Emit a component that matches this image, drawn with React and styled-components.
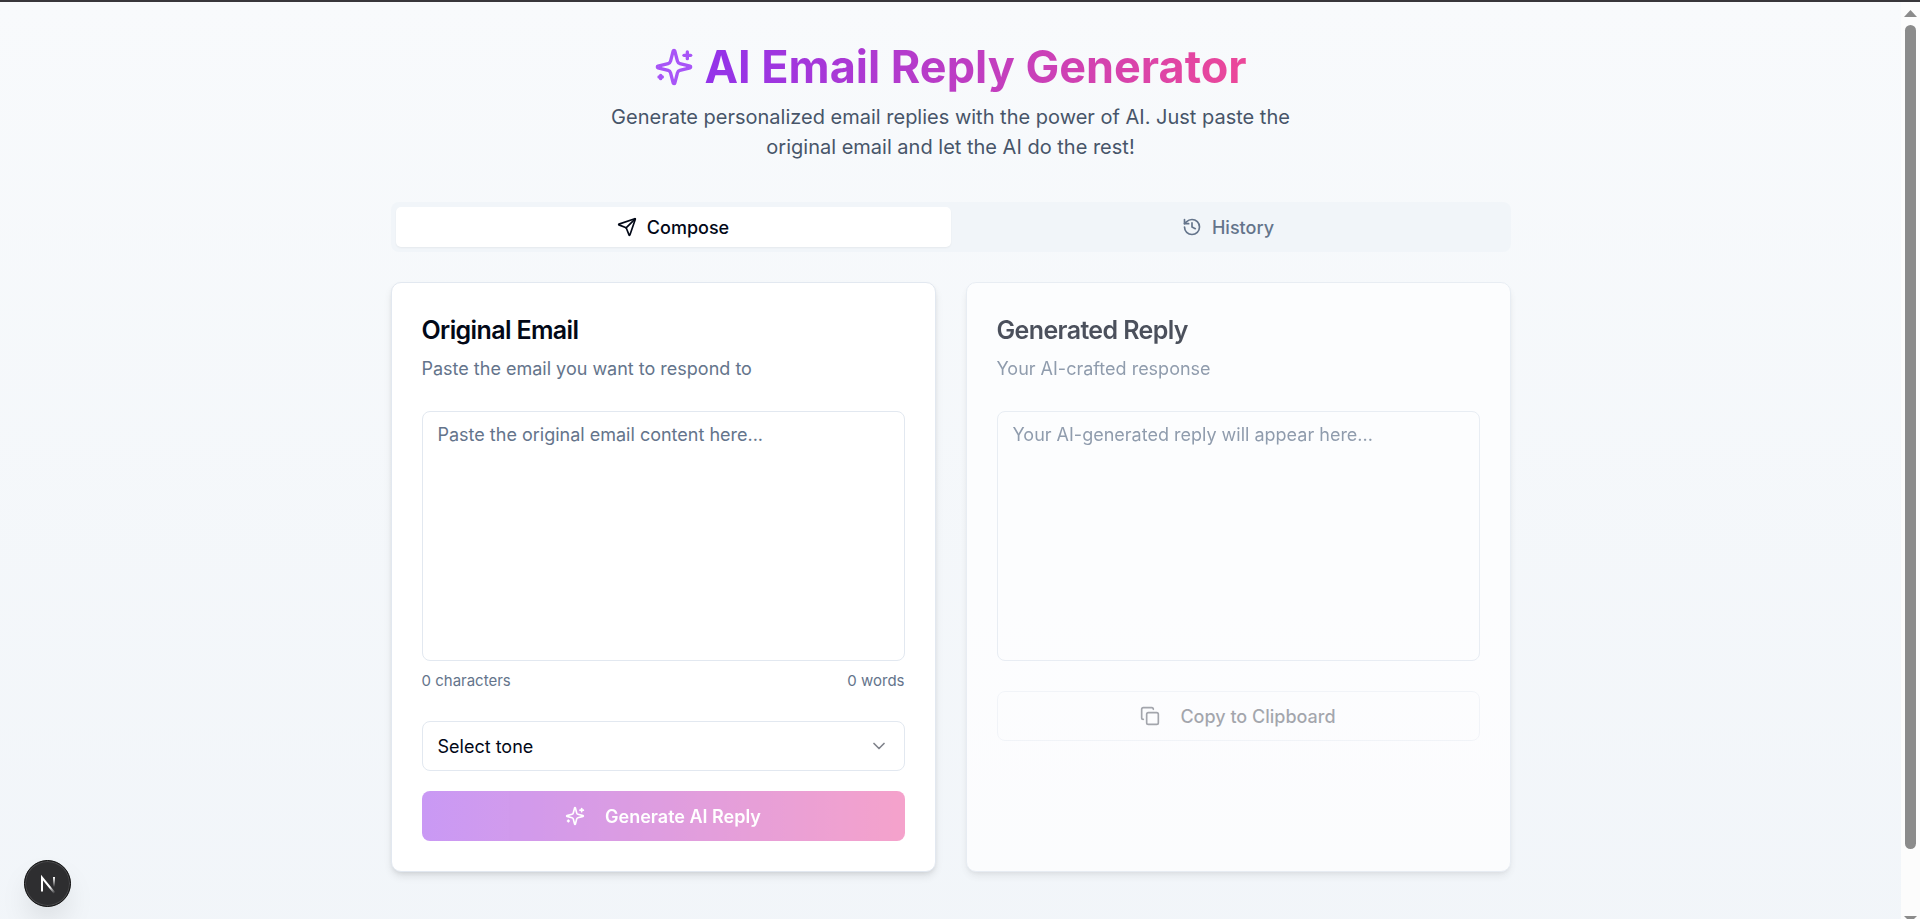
import React, { useState } from "react";
import styled, { createGlobalStyle, css } from "styled-components";
import { Send, History, Copy, ChevronDown } from "lucide-react";

const GlobalStyle = createGlobalStyle`
  *, *::before, *::after { box-sizing: border-box; }
  body {
    margin: 0;
    font-family: Inter, "Liberation Sans", sans-serif;
    font-size: 18px;
    line-height: 25px;
    color: #020817;
    background: #f1f5f9;
  }
  h1, h2, p { margin: 0; }
  button, textarea, select { font: inherit; color: inherit; }
`;

const Shell = styled.div`
  display: grid;
  grid-template-columns: minmax(0, 1fr) 19px;
  height: 100vh;
  border-top: 2px solid #38373b;
`;

const Viewport = styled.div`
  overflow-y: auto;
  scrollbar-width: none;
`;

const Page = styled.main`
  min-height: 108vh;
  padding: 40px 20px;
  background: linear-gradient(to bottom, #f8fafc, #f1f5f9);
`;

const Container = styled.div`
  max-width: 1120px;
  margin: 0 auto;
`;

const Header = styled.header`
  display: flex;
  flex-direction: column;
  align-items: center;
  gap: 10px;
  margin-bottom: 40px;
  text-align: center;
`;

const TitleRow = styled.div`
  display: flex;
  align-items: center;
  gap: 10px;
  color: #a855f7;
`;

const Title = styled.h1`
  font-size: 45px;
  line-height: 50px;
  font-weight: 700;
  color: transparent;
  background: linear-gradient(to right, #9333ea, #ec4899);
  background-clip: text;
  -webkit-background-clip: text;
`;

const Subtitle = styled.p`
  max-width: 720px;
  font-size: 20px;
  line-height: 30px;
  color: #475569;
`;

const TabList = styled.div`
  display: grid;
  grid-template-columns: 1fr 1fr;
  height: 50px;
  padding: 5px;
  margin-bottom: 30px;
  border-radius: 8px;
  background: #f1f5f9;
`;

const Tab = styled.button`
  display: flex;
  align-items: center;
  justify-content: center;
  gap: 10px;
  padding: 0;
  border: 0;
  border-radius: 5px;
  font-weight: 500;
  color: #64748b;
  background: transparent;
  ${(p) =>
    p.$active &&
    css`
      color: #020817;
      background: #ffffff;
      box-shadow: 0 1px 2px rgba(0, 0, 0, 0.05);
    `}
`;

const Cards = styled.div`
  display: grid;
  grid-template-columns: 1fr 1fr;
  gap: 30px;
`;

const Card = styled.section`
  padding: 30px;
  border: 1px solid #e2e8f0;
  border-radius: 10px;
  background: #ffffff;
  box-shadow: 0 5px 8px -1px rgba(0, 0, 0, 0.1), 0 2px 5px -2px rgba(0, 0, 0, 0.1);
  opacity: ${(p) => (p.$muted ? 0.7 : 1)};
`;

const CardHeader = styled.div`
  display: flex;
  flex-direction: column;
  gap: 8px;
  margin-bottom: 30px;
`;

const CardTitle = styled.h2`
  font-size: 25px;
  line-height: 35px;
  font-weight: 600;
  letter-spacing: -0.025em;
`;

const CardText = styled.p`
  color: #64748b;
`;

const TextBox = styled.textarea`
  display: block;
  width: 100%;
  height: 250px;
  padding: 10px 15px;
  border: 1px solid #e2e8f0;
  border-radius: 8px;
  background: #ffffff;
  resize: none;
  &::placeholder {
    color: #64748b;
    opacity: 1;
  }
`;

const Counters = styled.div`
  display: flex;
  justify-content: space-between;
  margin-top: 10px;
  font-size: 15px;
  line-height: 20px;
  color: #64748b;
`;

const SelectWrap = styled.div`
  position: relative;
  margin: 30px 0 20px;
  svg {
    position: absolute;
    top: 15px;
    right: 16px;
    opacity: 0.5;
    pointer-events: none;
  }
`;

const Select = styled.select`
  appearance: none;
  display: block;
  width: 100%;
  height: 50px;
  padding: 0 15px;
  border: 1px solid #e2e8f0;
  border-radius: 8px;
  background: #ffffff;
`;

const Button = styled.button`
  display: flex;
  align-items: center;
  justify-content: center;
  gap: 20px;
  width: 100%;
  height: 50px;
  border: 1px solid #e2e8f0;
  border-radius: 8px;
  font-weight: 500;
  background: #ffffff;
  &:disabled {
    opacity: 0.5;
  }
`;

const GenerateButton = styled(Button)`
  border: 0;
  font-weight: 600;
  color: #ffffff;
  background: linear-gradient(to right, #9333ea, #ec4899);
`;

const CopyButton = styled(Button)`
  margin-top: 30px;
`;

const ScrollTrack = styled.div`
  display: flex;
  flex-direction: column;
  align-items: center;
  padding-top: 8px;
  background: #fcfcfc;
`;

const ScrollThumb = styled.div`
  flex: 1;
  width: 11px;
  margin: 8px 0 67px;
  border-radius: 6px;
  background: #8b8b8b;
`;

const DevBadge = styled.button`
  position: fixed;
  left: 24px;
  bottom: 12px;
  width: 47px;
  height: 47px;
  padding: 0;
  border: 1px solid #0c0c0c;
  border-radius: 50%;
  display: grid;
  place-items: center;
  background: #2e2e30;
  box-shadow: inset 0 0 0 1px #4a4a4c, 0 16px 32px -8px rgba(0, 0, 0, 0.18);
`;

function SparklesIcon({ size }) {
  return (
    <svg
      width={size}
      height={size}
      viewBox="0 0 24 24"
      fill="none"
      stroke="currentColor"
      strokeWidth="2"
      strokeLinecap="round"
      strokeLinejoin="round"
      aria-hidden="true"
    >
      <path d="M9.937 15.5A2 2 0 0 0 8.5 14.063l-6.135-1.582a.5.5 0 0 1 0-.962L8.5 9.936A2 2 0 0 0 9.937 8.5l1.582-6.135a.5.5 0 0 1 .963 0L14.063 8.5A2 2 0 0 0 15.5 9.937l6.135 1.581a.5.5 0 0 1 0 .964L15.5 14.063a2 2 0 0 0-1.437 1.437l-1.582 6.135a.5.5 0 0 1-.963 0z" />
      <path d="M20 3v4" />
      <path d="M22 5h-4" />
      <path d="M4 17v2" />
      <path d="M5 18H3" />
    </svg>
  );
}

function NextLogo() {
  return (
    <svg width="20" height="20" viewBox="0 0 20 20" fill="none" aria-hidden="true">
      <defs>
        <linearGradient id="diag" x1="12" y1="13" x2="17" y2="19" gradientUnits="userSpaceOnUse">
          <stop stopColor="#fff" />
          <stop offset="1" stopColor="#fff" stopOpacity="0" />
        </linearGradient>
        <linearGradient id="stem" x1="16" y1="3" x2="16" y2="13" gradientUnits="userSpaceOnUse">
          <stop stopColor="#fff" />
          <stop offset="1" stopColor="#fff" stopOpacity="0" />
        </linearGradient>
      </defs>
      <path d="M4 17.5V3.5L16.5 19" stroke="url(#diag)" strokeWidth="2" />
      <path d="M16 3V14" stroke="url(#stem)" strokeWidth="2" />
    </svg>
  );
}

export default function App() {
  const [tab, setTab] = useState("compose");
  const [email, setEmail] = useState("");
  const words = email.trim() ? email.trim().split(/\s+/).length : 0;

  return (
    <>
      <GlobalStyle />
      <Shell>
        <Viewport>
          <Page>
            <Container>
              <Header>
                <TitleRow>
                  <SparklesIcon size={40} />
                  <Title>AI Email Reply Generator</Title>
                </TitleRow>
                <Subtitle>
                  Generate personalized email replies with the power of AI. Just paste the original
                  email and let the AI do the rest!
                </Subtitle>
              </Header>

              <TabList role="tablist">
                <Tab
                  role="tab"
                  aria-selected={tab === "compose"}
                  $active={tab === "compose"}
                  onClick={() => setTab("compose")}
                >
                  <Send size={20} />
                  Compose
                </Tab>
                <Tab
                  role="tab"
                  aria-selected={tab === "history"}
                  $active={tab === "history"}
                  onClick={() => setTab("history")}
                >
                  <History size={20} />
                  History
                </Tab>
              </TabList>

              <Cards>
                <Card>
                  <CardHeader>
                    <CardTitle id="original-title">Original Email</CardTitle>
                    <CardText>Paste the email you want to respond to</CardText>
                  </CardHeader>
                  <TextBox
                    aria-labelledby="original-title"
                    placeholder="Paste the original email content here..."
                    value={email}
                    onChange={(e) => setEmail(e.target.value)}
                  />
                  <Counters>
                    <span>{email.length} characters</span>
                    <span>{words} words</span>
                  </Counters>
                  <SelectWrap>
                    <Select aria-label="Tone" defaultValue="">
                      <option value="">Select tone</option>
                      <option value="professional">Professional</option>
                      <option value="friendly">Friendly</option>
                    </Select>
                    <ChevronDown size={20} />
                  </SelectWrap>
                  <GenerateButton disabled={!email}>
                    <SparklesIcon size={20} />
                    Generate AI Reply
                  </GenerateButton>
                </Card>

                <Card $muted>
                  <CardHeader>
                    <CardTitle id="reply-title">Generated Reply</CardTitle>
                    <CardText>Your AI-crafted response</CardText>
                  </CardHeader>
                  <TextBox
                    aria-labelledby="reply-title"
                    placeholder="Your AI-generated reply will appear here..."
                    readOnly
                  />
                  <CopyButton disabled>
                    <Copy size={20} />
                    Copy to Clipboard
                  </CopyButton>
                </Card>
              </Cards>
            </Container>
          </Page>
        </Viewport>
        <ScrollTrack aria-hidden="true">
          <svg width="13" height="7" viewBox="0 0 13 7">
            <path d="M6.5 0L13 7H0Z" fill="#8b8b8b" />
          </svg>
          <ScrollThumb />
          <svg width="13" height="3" viewBox="0 0 13 3">
            <path d="M0 0H13L10 3H3Z" fill="#8b8b8b" />
          </svg>
        </ScrollTrack>
      </Shell>
      <DevBadge aria-label="Open Next.js Dev Tools">
        <NextLogo />
      </DevBadge>
    </>
  );
}
